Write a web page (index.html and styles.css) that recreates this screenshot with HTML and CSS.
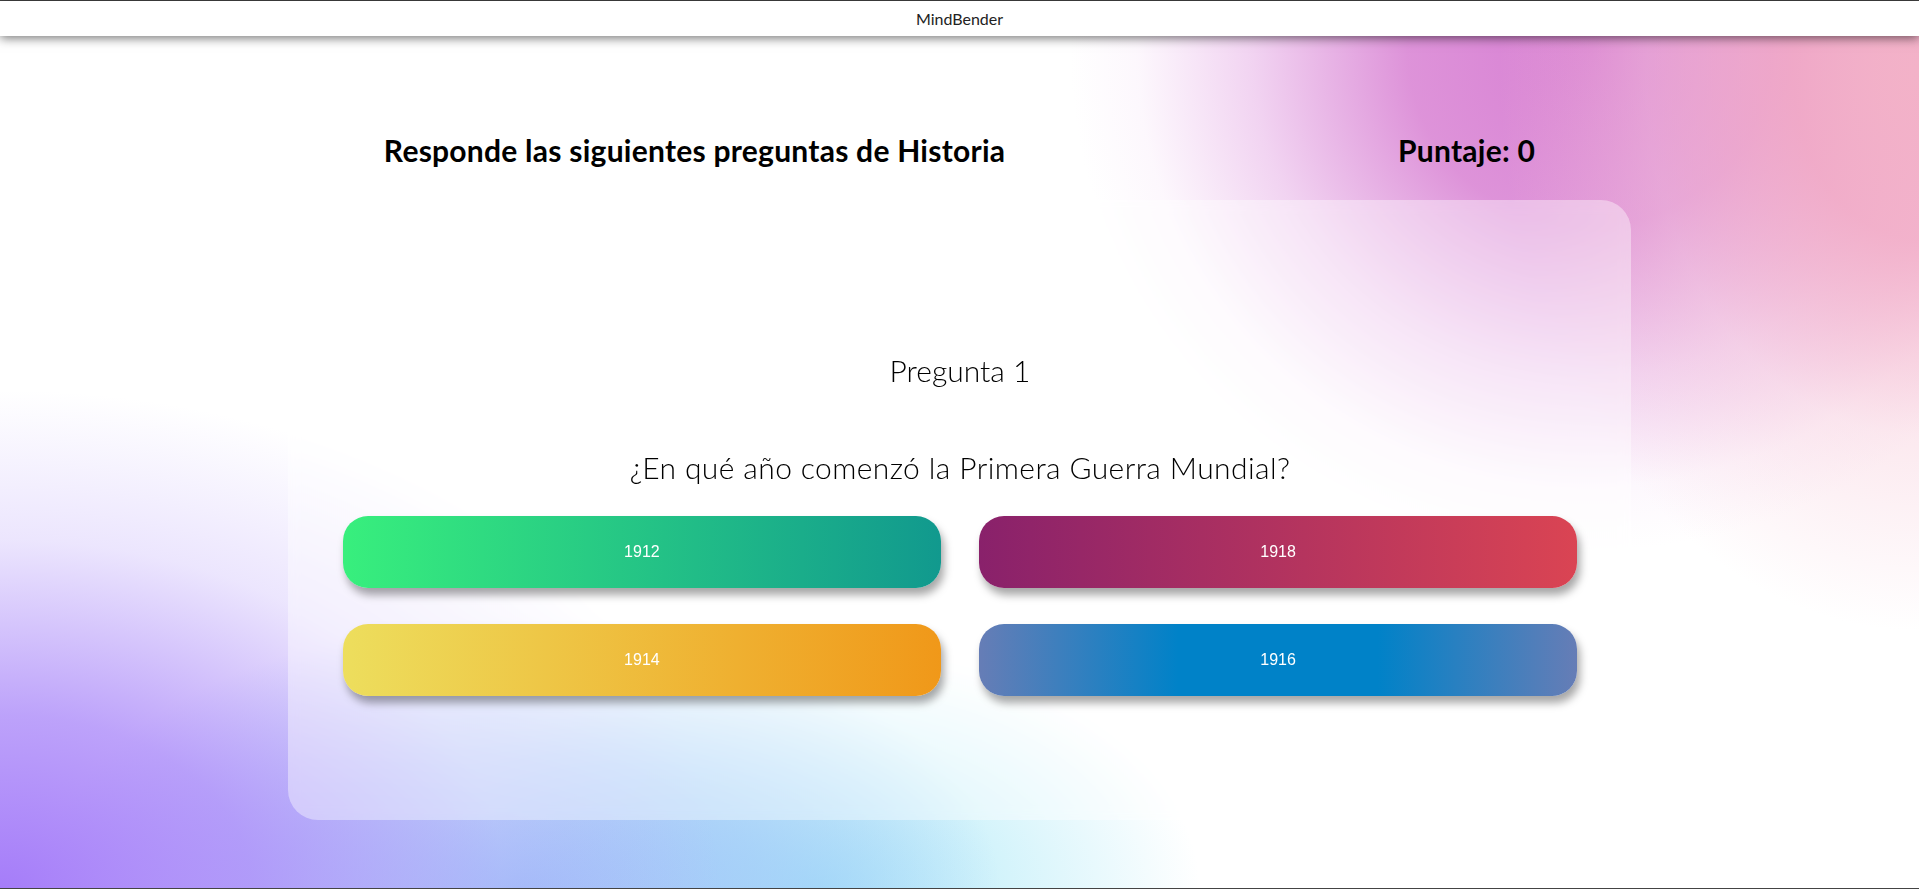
FILE: index.html
```html
<!DOCTYPE html>
<html lang="es">
<head>
<meta charset="utf-8">
<title>MindBender</title>
<link rel="stylesheet" href="styles.css">
</head>
<body>
<div class="page">
  <header class="topbar">MindBender</header>
  <main class="quiz">
    <div class="quiz-head">
      <h1 class="quiz-title">Responde las siguientes preguntas de Historia</h1>
      <h2 class="quiz-score">Puntaje: 0</h2>
    </div>
    <section class="card">
      <h3 class="q-number">Pregunta 1</h3>
      <p class="q-text">¿En qué año comenzó la Primera Guerra Mundial?</p>
      <div class="answers">
        <button class="answer answer-green">1912</button>
        <button class="answer answer-red">1918</button>
        <button class="answer answer-yellow">1914</button>
        <button class="answer answer-blue">1916</button>
      </div>
    </section>
  </main>
</div>
</body>
</html>
```

FILE: styles.css
```css
* { box-sizing: border-box; }

html, body {
  margin: 0;
  padding: 0;
}

body {
  font-family: "Lato", "Open Sans", sans-serif;
  color: #000;
  overflow: hidden;
}

.page {
  height: 889px;
  border-top: 1px solid #444;
  border-bottom: 1px solid #444;
  background:
    radial-gradient(ellipse 420px 560px at 1919px 70px, rgba(243,178,200,1) 0%, rgba(242,170,196,0.85) 30%, rgba(247,200,215,0.4) 65%, rgba(250,225,232,0) 100%),
    radial-gradient(ellipse 520px 500px at 1590px 50px, rgba(215,127,211,1) 0%, rgba(218,135,213,0.9) 35%, rgba(228,168,228,0.5) 65%, rgba(240,205,242,0.15) 87%, rgba(245,220,245,0) 100%),
    radial-gradient(ellipse 720px 500px at 0px 889px, rgba(165,124,249,1) 0%, rgba(170,136,249,0.78) 35%, rgba(200,182,251,0.35) 70%, rgba(220,210,252,0) 100%),
    radial-gradient(ellipse 480px 270px at 520px 889px, rgba(150,188,248,1) 0%, rgba(156,196,248,0.65) 50%, rgba(170,205,248,0) 100%),
    radial-gradient(ellipse 380px 240px at 820px 889px, rgba(172,232,248,1) 0%, rgba(190,238,249,0.65) 50%, rgba(210,245,250,0) 100%),
    #ffffff;
}

.topbar {
  position: relative;
  z-index: 2;
  height: 35px;
  display: flex;
  align-items: center;
  justify-content: center;
  background: #fff;
  font-family: "Lato", sans-serif;
  font-size: 16px;
  font-weight: 400;
  color: #222;
  box-shadow: 0 2px 10px rgba(0, 0, 0, 0.55);
}

.quiz {
  width: 70%;
  margin: 0 auto;
}

.quiz-head {
  display: flex;
  justify-content: space-between;
  align-items: baseline;
  padding: 0 96px;
  margin-top: 97px;
}

.quiz-title,
.quiz-score {
  margin: 0;
  font-size: 30px;
  line-height: 35px;
  font-weight: 700;
  letter-spacing: 0.25px;
}

.card {
  margin-top: 32px;
  padding: 152px 54px 124px 55px;
  border-radius: 30px;
  background: rgba(255, 255, 255, 0.4);
  backdrop-filter: blur(6px);
  text-align: center;
}

.q-number {
  margin: 0;
  font-size: 30px;
  line-height: 36px;
  font-weight: 300;
}

.q-text {
  margin: 62px 0 0;
  font-size: 30px;
  line-height: 34px;
  font-weight: 300;
  letter-spacing: 0.4px;
}

.answers {
  margin-top: 32px;
  display: grid;
  grid-template-columns: 1fr 1fr;
  grid-auto-rows: 72px;
  column-gap: 38px;
  row-gap: 36px;
}

.answer {
  border: none;
  border-radius: 25px;
  color: #fff;
  font-family: "Liberation Sans", Arial, sans-serif;
  font-size: 16px;
  box-shadow: 3px 7px 9px rgba(0, 0, 0, 0.35);
  cursor: pointer;
}

.answer-green { background: linear-gradient(to right, #38ef7d, #11998e); }
.answer-red { background: linear-gradient(to right, #89216b, #da4453); }
.answer-yellow { background: linear-gradient(to right, #edde5d, #f09819); }
.answer-blue { background: linear-gradient(to right, #667db6, #0082c8, #0082c8, #667db6); }
```
